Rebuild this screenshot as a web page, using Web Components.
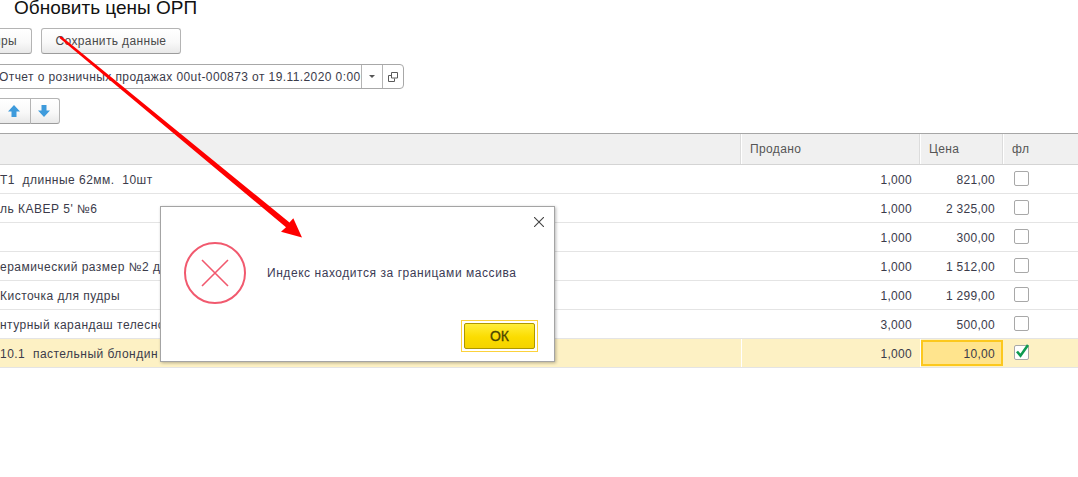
<!DOCTYPE html>
<html>
<head>
<meta charset="utf-8">
<style>
    html, body { margin: 0; background: #fff; overflow: hidden; height: 477px; }
    body { font: 12px "Liberation Sans", Arial, sans-serif; color: #3b3b4a; }
</style>
</head>
<body>
<form-page></form-page>
<script>
class FormButton extends HTMLElement {
    connectedCallback() {
        this.attachShadow({ mode: 'open' });
        this.shadowRoot.innerHTML = `
            <style>
                :host {
                    display: inline-flex;
                    align-items: center;
                    justify-content: center;
                    box-sizing: border-box;
                    height: 26px;
                    border: 1px solid #b4b4b4;
                    border-bottom-color: #9c9c9c;
                    border-radius: 3px;
                    background: linear-gradient(#ffffff, #f9f9f9 55%, #e9e9e9);
                    color: #4a4a4a;
                    font-size: 12px;
                    letter-spacing: .35px;
                    white-space: nowrap;
                    overflow: hidden;
                }
            </style>
            <slot></slot>
        `;
    }
}

class RefField extends HTMLElement {
    connectedCallback() {
        this.attachShadow({ mode: 'open' });
        this.shadowRoot.innerHTML = `
            <style>
                :host {
                    display: flex;
                    box-sizing: border-box;
                    width: 414px;
                    height: 25px;
                    margin-left: -10px;
                    border: 1px solid #a8a8a8;
                    border-radius: 4px;
                    color: #3b3b4a;
                    letter-spacing: .41px;
                }
                .text {
                    flex: 1;
                    min-width: 0;
                    overflow: hidden;
                    white-space: nowrap;
                    padding-left: 8px;
                    line-height: 24px;
                }
                .btn {
                    width: 20px;
                    border-left: 1px solid #b4b4b4;
                    display: flex;
                    align-items: center;
                    justify-content: center;
                }
            </style>
            <div class="text"><slot></slot></div>
            <div class="btn">
                <svg width="6" height="3" viewBox="0 0 6 3"><path d="M0 0h6L3 3z" fill="#555"/></svg>
            </div>
            <div class="btn">
                <svg width="10" height="10" viewBox="0 0 10 10" fill="none" stroke="#5a5a5a">
                    <path d="M3.500 .5h6v5.500h-6z"/>
                    <path d="M3 3.500h-2.500v6h6v-3"/>
                </svg>
            </div>
        `;
    }
}

class GridHeader extends HTMLElement {
    connectedCallback() {
        this.attachShadow({ mode: 'open' });
        this.shadowRoot.innerHTML = `
            <style>
                :host {
                    display: grid;
                    grid-template-columns: 742px 179px 83px 1fr;
                    height: 32px;
                    box-sizing: border-box;
                    border-top: 1px solid #a6a6a6;
                    border-bottom: 1px solid #d4d4d4;
                    background: #f0f0f0;
                    color: #555;
                    letter-spacing: .38px;
                }
                div {
                    border-right: 1px solid #fff;
                    box-shadow: inset -1px 0 0 #dcdcdc;
                    padding-left: 8px;
                    line-height: 30px;
                }
                div:last-child { border: 0; box-shadow: none; }
            </style>
            <div></div><div>Продано</div><div>Цена</div><div>фл</div>
        `;
    }
}

class GridRow extends HTMLElement {
    connectedCallback() {
        const qty = this.getAttribute('qty');
        const price = this.getAttribute('price');
        const selected = this.hasAttribute('selected');
        this.attachShadow({ mode: 'open' });
        this.shadowRoot.innerHTML = `
            <style>
                :host {
                    display: grid;
                    grid-template-columns: 742px 179px 83px 1fr;
                    height: 29px;
                    box-sizing: border-box;
                    border-bottom: 1px solid #e4e4e4;
                    color: #3b3b4a;
                    letter-spacing: .3px;
                }
                :host([selected]) { background: #fdf1c4; }
                div { line-height: 31px; white-space: nowrap; overflow: hidden; }
                .name { display: flex; letter-spacing: .48px; white-space: pre; }
                .num { text-align: right; padding-right: 9px; }
                :host([selected]) .name,
                :host([selected]) .qty { border-right: 1px solid #fff; }
                :host([selected]) .qty { padding-right: 8px; }
                :host([selected]) .price {
                    background: #ffe48d;
                    box-sizing: border-box;
                    border: 2px solid #fcc81e;
                    margin: 1px 1px 1px 0;
                    padding-right: 6px;
                    line-height: 25px;
                }
                .flag { padding: 6px 0 0 10px; overflow: visible; }
                .box {
                    display: block;
                    box-sizing: border-box;
                    width: 15px;
                    height: 15px;
                    border: 1px solid #a8a8a8;
                    border-radius: 2px;
                    background: #fff;
                    position: relative;
                }
                svg { position: absolute; left: 1px; top: -4px; overflow: visible; }
            </style>
            <div class="name"><slot></slot></div>
            <div class="num qty">${qty}</div>
            <div class="num price">${price}</div>
            <div class="flag">
                <span class="box">${selected ? '<svg width="15" height="16" viewBox="0 0 15 16"><path d="M1 9.500l3.500 4.200L12 3" fill="none" stroke="#0e9a50" stroke-width="2.600"/></svg>' : ''}</span>
            </div>
        `;
    }
}

class MessageDialog extends HTMLElement {
    connectedCallback() {
        this.attachShadow({ mode: 'open' });
        this.shadowRoot.innerHTML = `
            <style>
                :host {
                    position: absolute;
                    left: 160px;
                    top: 206px;
                    width: 395px;
                    height: 156px;
                    box-sizing: border-box;
                    border: 1px solid #a4a4a4;
                    box-shadow: 1px 1px 3px rgba(0, 0, 0, .28);
                    background: #fff;
                    display: flex;
                    flex-direction: column;
                    color: #3b3b55;
                }
                .close { display: flex; justify-content: flex-end; padding: 10px 10px 0 0; height: 10px; }
                .body {
                    display: flex;
                    align-items: center;
                    gap: 21px;
                    padding: 15px 0 0 23px;
                    letter-spacing: .55px;
                }
                .foot { margin-top: auto; display: flex; justify-content: flex-end; padding: 0 16px 9px 0; }
                .focus { border: 1px solid #fcd23c; padding: 2px; display: flex; }
                .ok {
                    box-sizing: border-box;
                    width: 71px;
                    height: 26px;
                    border: 1px solid #ad9700;
                    border-radius: 2px;
                    background: linear-gradient(#ffee3a, #fbdc00 55%, #f4d300);
                    color: #4c4600;
                    font-size: 14px;
                    text-align: center;
                    line-height: 25px;
                    -webkit-text-stroke: .3px #4c4600;
                }
            </style>
            <div class="close">
                <svg width="10" height="10" viewBox="0 0 10 10" stroke="#444" fill="none" stroke-width="1.100"><path d="M0 0l10 10M10 0l-10 10"/></svg>
            </div>
            <div class="body">
                <svg width="62" height="62" viewBox="0 0 62 62" fill="none" stroke="#f1596e">
                    <circle cx="31" cy="31" r="30" stroke-width="2"/>
                    <path d="M18 18l26 26M44 18l-26 26" stroke-width="1.600"/>
                </svg>
                <span><slot></slot></span>
            </div>
            <div class="foot"><div class="focus"><div class="ok">ОК</div></div></div>
        `;
    }
}

class RedArrow extends HTMLElement {
    connectedCallback() {
        this.attachShadow({ mode: 'open' });
        this.shadowRoot.innerHTML = `
            <style>
                :host { position: absolute; left: 0; top: 0; width: 1078px; height: 477px; pointer-events: none; }
            </style>
            <svg width="1078" height="477" viewBox="0 0 1078 477">
                <polygon fill="#fe0000" points="60,36.500 61.500,36.500 289.500,222.500 293.300,218.300 302,237.500 281,231.700 286,227.300 59.500,38"/>
            </svg>
        `;
    }
}

class FormPage extends HTMLElement {
    connectedCallback() {
        this.attachShadow({ mode: 'open' });
        this.shadowRoot.innerHTML = `
            <style>
                :host { display: block; position: relative; width: 1078px; height: 477px; overflow: hidden; }
                .title {
                    height: 28px;
                    padding-left: 14px;
                    color: #111;
                    font-size: 19px;
                    line-height: 16px;
                    white-space: nowrap;
                }
                .bar { display: flex; gap: 9px; height: 26px; margin: 0 0 10px -10px; }
                .cut { width: 42px; justify-content: flex-end; padding-right: 14px; }
                .save { width: 140px; }
                .field { margin-bottom: 9px; }
                .arrows { display: flex; height: 26px; margin: 0 0 9px -3px; }
                .up { width: 34px; border-radius: 3px 0 0 3px; }
                .down { width: 30px; margin-left: -1px; padding-right: 2px; border-radius: 0 3px 3px 0; }
            </style>
            <div class="title">Обновить цены ОРП</div>
            <div class="bar">
                <form-button class="cut">иры</form-button>
                <form-button class="save">Сохранить данные</form-button>
            </div>
            <div class="field"><ref-field>Отчет о розничных продажах 00ut-000873 от 19.11.2020 0:00:00</ref-field></div>
            <div class="arrows">
                <form-button class="up"><svg width="14" height="14" viewBox="0 0 14 14"><path d="M7 1l6 6.500H9.500V13h-5V7.500H1z" fill="#3e9bdc"/></svg></form-button>
                <form-button class="down"><svg width="14" height="14" viewBox="0 0 14 14"><path d="M7 13l6-6.500H9.500V1h-5v5.500H1z" fill="#3e9bdc"/></svg></form-button>
            </div>
            <div class="table">
                <grid-header></grid-header>
                <grid-row qty="1,000" price="821,00">Т1  длинные 62мм.  10шт</grid-row>
                <grid-row qty="1,000" price="2 325,00">ль КАВЕР 5' №6</grid-row>
                <grid-row qty="1,000" price="300,00"></grid-row>
                <grid-row qty="1,000" price="1 512,00">ерамический размер №2 д</grid-row>
                <grid-row qty="1,000" price="1 299,00">Кисточка для пудры</grid-row>
                <grid-row qty="3,000" price="500,00">нтурный карандаш телесно</grid-row>
                <grid-row qty="1,000" price="10,00" selected>10.1  пастельный блондин</grid-row>
            </div>
            <message-dialog>Индекс находится за границами массива</message-dialog>
            <red-arrow></red-arrow>
        `;
    }
}

customElements.define('form-button', FormButton);
customElements.define('ref-field', RefField);
customElements.define('grid-header', GridHeader);
customElements.define('grid-row', GridRow);
customElements.define('message-dialog', MessageDialog);
customElements.define('red-arrow', RedArrow);
customElements.define('form-page', FormPage);
</script>
</body>
</html>
